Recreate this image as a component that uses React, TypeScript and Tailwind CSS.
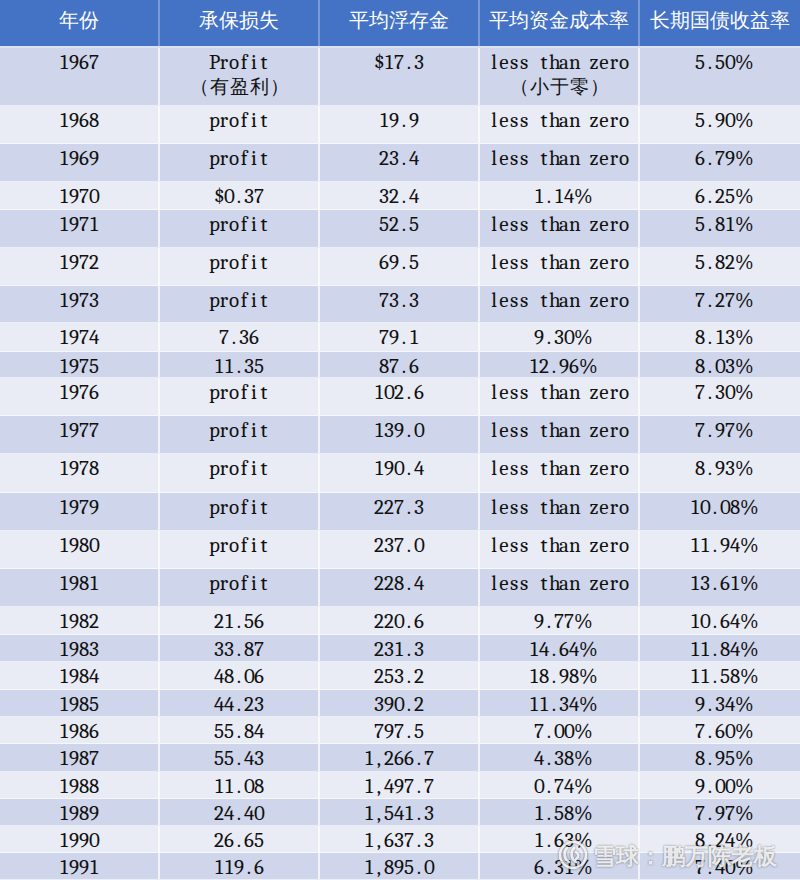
import React from "react";

type Cell = string | string[];
type Row = { c: Cell[]; h: string };

const rows: Row[] = [
  { c: ["1967", ["Profit", "（有盈利）"], "$17.3", ["less than zero", "（小于零）"], "5.50%"], h: "h-[58px]" },
  { c: ["1968", "profit", "19.9", "less than zero", "5.90%"], h: "h-[38px]" },
  { c: ["1969", "profit", "23.4", "less than zero", "6.79%"], h: "h-[38px]" },
  { c: ["1970", "$0.37", "32.4", "1.14%", "6.25%"], h: "h-[28px]" },
  { c: ["1971", "profit", "52.5", "less than zero", "5.81%"], h: "h-[38px]" },
  { c: ["1972", "profit", "69.5", "less than zero", "5.82%"], h: "h-[38px]" },
  { c: ["1973", "profit", "73.3", "less than zero", "7.27%"], h: "h-[37px]" },
  { c: ["1974", "7.36", "79.1", "9.30%", "8.13%"], h: "h-[29px]" },
  { c: ["1975", "11.35", "87.6", "12.96%", "8.03%"], h: "h-[26px]" },
  { c: ["1976", "profit", "102.6", "less than zero", "7.30%"], h: "h-[38px]" },
  { c: ["1977", "profit", "139.0", "less than zero", "7.97%"], h: "h-[38px]" },
  { c: ["1978", "profit", "190.4", "less than zero", "8.93%"], h: "h-[39px]" },
  { c: ["1979", "profit", "227.3", "less than zero", "10.08%"], h: "h-[38px]" },
  { c: ["1980", "profit", "237.0", "less than zero", "11.94%"], h: "h-[38px]" },
  { c: ["1981", "profit", "228.4", "less than zero", "13.61%"], h: "h-[38px]" },
  { c: ["1982", "21.56", "220.6", "9.77%", "10.64%"], h: "h-[28px]" },
  { c: ["1983", "33.87", "231.3", "14.64%", "11.84%"], h: "h-[27px]" },
  { c: ["1984", "48.06", "253.2", "18.98%", "11.58%"], h: "h-[28px]" },
  { c: ["1985", "44.23", "390.2", "11.34%", "9.34%"], h: "h-[27px]" },
  { c: ["1986", "55.84", "797.5", "7.00%", "7.60%"], h: "h-[27px]" },
  { c: ["1987", "55.43", "1,266.7", "4.38%", "8.95%"], h: "h-[28px]" },
  { c: ["1988", "11.08", "1,497.7", "0.74%", "9.00%"], h: "h-[27px]" },
  { c: ["1989", "24.40", "1,541.3", "1.58%", "7.97%"], h: "h-[27px]" },
  { c: ["1990", "26.65", "1,637.3", "1.63%", "8.24%"], h: "h-[27px]" },
  { c: ["1991", "119.6", "1,895.0", "6.31%", "7.40%"], h: "h-[27px]" },
];

const headers = ["年份", "承保损失", "平均浮存金", "平均资金成本率", "长期国债收益率"];

function Mono({ text }: { text: string }) {
  const parts = Array.from(text);
  return (
    <span className="inline-flex justify-center">
      {parts.map((ch, i) =>
        ch.charCodeAt(0) < 128 ? (
          <span key={i} className="inline-block w-[10px] text-center text-[21px] font-serif">
            {ch === " " ? "\u00a0" : ch}
          </span>
        ) : (
          <span key={i} className="inline-block w-[20px] text-center text-[19px] font-sans">
            {ch}
          </span>
        )
      )}
    </span>
  );
}

function Logo() {
  return (
    <svg width="30" height="30" viewBox="0 0 30 30" className="drop-shadow-[0_0_1px_rgba(0,0,0,0.6)]">
      <circle cx="15" cy="15" r="13" fill="none" stroke="rgba(255,255,255,0.85)" strokeWidth="2.6" />
      <path d="M9 8 C5 12 6 19 11 22" fill="none" stroke="rgba(255,255,255,0.85)" strokeWidth="2.6" strokeLinecap="round" />
      <path d="M16 8 C12 12 13 19 18 22" fill="none" stroke="rgba(255,255,255,0.85)" strokeWidth="2.6" strokeLinecap="round" />
      <path d="M18 12 C21 14 21 17 18 19" fill="none" stroke="rgba(255,255,255,0.85)" strokeWidth="2.6" strokeLinecap="round" />
    </svg>
  );
}

export default function App() {
  return (
    <div className="relative w-[800px] h-[880px] overflow-hidden bg-white text-[20px] text-[#111] font-sans">
      <div className="flex h-[48px] bg-[#4472C4] border-b-2 border-white/80">
        {headers.map((h, i) => (
          <div
            key={i}
            className={`w-[160px] text-center text-white pt-[6px] leading-[28px] ${
              i < 4 ? "border-r-2 border-[#7B9AD8]" : ""
            }`}
          >
            {h}
          </div>
        ))}
      </div>
      {rows.map((r, ri) => (
        <div
          key={ri}
          className={`flex ${r.h} border-b border-white/60 ${ri % 2 === 0 ? "bg-[#CFD5EA]" : "bg-[#E9EBF5]"}`}
        >
          {r.c.map((cell, ci) => (
            <div
              key={ci}
              className={`w-[160px] flex flex-col items-center pt-[2px] leading-[24px] ${
                ci < 4 ? "border-r-2 border-white/70" : ""
              }`}
            >
              {(Array.isArray(cell) ? cell : [cell]).map((t, k) => (
                <Mono key={k} text={t} />
              ))}
            </div>
          ))}
        </div>
      ))}
      <div className="absolute left-[558px] top-[840px] flex items-center gap-[5px]">
        <Logo />
        <span className="text-[23px] leading-[30px] font-semibold text-white/85 [text-shadow:0_0_2px_rgba(0,0,0,0.55)]">
          雪球：鹏万陈老板
        </span>
      </div>
    </div>
  );
}
